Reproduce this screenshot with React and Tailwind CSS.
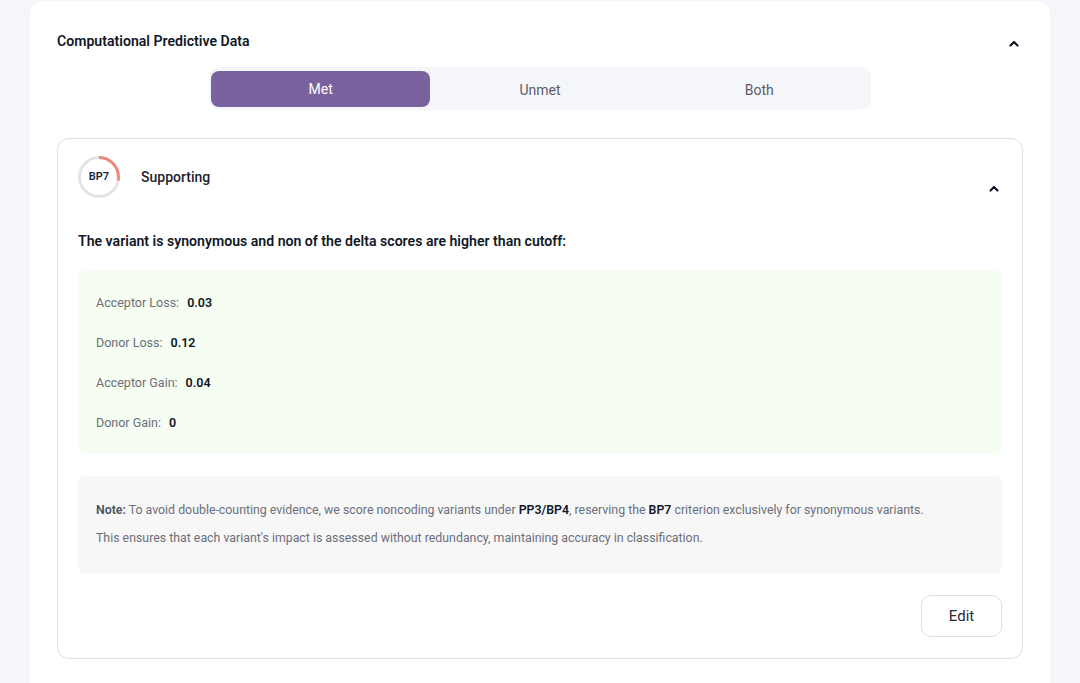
import React, { useState } from 'react';

const Chevron = () => (
  <svg className="w-3 h-3 text-gray-900" fill="none" stroke="currentColor" strokeWidth="2.2" viewBox="0 0 12 12">
    <path strokeLinecap="round" strokeLinejoin="round" d="M2.5 7.5L6 4l3.5 3.5" />
  </svg>
);

const Ring = ({ label }) => (
  <div className="relative w-[42px] h-[42px] shrink-0">
    <svg className="w-[42px] h-[42px]" viewBox="0 0 42 42">
      <circle cx="21" cy="21" r="19.5" fill="none" stroke="#e4e4e7" strokeWidth="3" />
      <circle
        cx="21"
        cy="21"
        r="19.5"
        fill="none"
        stroke="#f0877d"
        strokeWidth="3"
        strokeDasharray="34 200"
        transform="rotate(-90 21 21)"
      />
    </svg>
    <span className="absolute inset-0 flex items-center justify-center text-[11px] font-semibold text-gray-800">{label}</span>
  </div>
);

const scores = [
  ['Acceptor Loss:', '0.03'],
  ['Donor Loss:', '0.12'],
  ['Acceptor Gain:', '0.04'],
  ['Donor Gain:', '0'],
];

export default function App() {
  const [tab, setTab] = useState('Met');
  return (
    <div className="min-h-screen bg-[#f5f6fa] px-[30px] pt-[1px]" style={{ fontFamily: 'Roboto, "Liberation Sans", sans-serif' }}>
      <div className="bg-white rounded-t-xl px-[27px] pt-[31px] pb-6">
        <div className="flex items-center justify-between h-5">
          <h2 className="text-[14.1px] font-semibold text-[#111827]">Computational Predictive Data</h2>
          <div className="mr-[3px] mt-1"><Chevron /></div>
        </div>

        <div className="mx-auto mt-[15px] w-[662px] bg-[#f5f6fa] rounded-[10px] py-[3px] px-[2px] grid grid-cols-3">
          {['Met', 'Unmet', 'Both'].map((t) => (
            <button
              key={t}
              onClick={() => setTab(t)}
              className={
                tab === t
                  ? 'h-[36px] mt-[1px] rounded-[8px] bg-[#7a629e] text-white text-[14px]'
                  : 'h-[36px] mt-[1px] pt-[3px] text-[14px] text-[#5b5b66]'
              }
            >
              {t}
            </button>
          ))}
        </div>

        <div className="mt-[28px] border border-[#dedee3] rounded-xl px-5 pt-[17px] pb-[21px]">
          <div className="flex items-start justify-between">
            <div className="flex items-center gap-[21px]">
              <Ring label="BP7" />
              <span className="text-[14px] font-medium text-[#1f2230]">Supporting</span>
            </div>
            <div className="mt-[27px] mr-[2px]"><Chevron /></div>
          </div>

          <p className="mt-[33px] text-[14.1px] font-semibold text-[#111827] leading-5">
            The variant is synonymous and non of the delta scores are higher than cutoff:
          </p>

          <div className="mt-[19px] bg-[#f6fdf2] rounded-lg px-[18px] pt-[23px] pb-[21px] flex flex-col gap-5">
            {scores.map(([k, v]) => (
              <div key={k} className="h-5 flex items-center text-[12.5px]">
                <span className="text-[#6b6f7b]">{k}</span>
                <span className="ml-2 font-semibold text-[#111827]">{v}</span>
              </div>
            ))}
          </div>

          <div className="mt-[22px] bg-[#f7f7f8] rounded-lg px-[18px] pt-[24px] pb-[26px] text-[12.35px] text-[#6b6f7b] leading-5">
            <p>
              <span className="font-semibold text-[#4b4f5c]">Note:</span> To avoid double-counting evidence, we score noncoding variants under{' '}
              <span className="font-semibold text-[#111827]">PP3/BP4</span>, reserving the{' '}
              <span className="font-semibold text-[#111827]">BP7</span> criterion exclusively for synonymous variants.
            </p>
            <p className="mt-2">This ensures that each variant's impact is assessed without redundancy, maintaining accuracy in classification.</p>
          </div>

          <div className="mt-[21px] flex justify-end">
            <button className="w-[81px] h-[42px] border border-[#dedee3] rounded-[10px] text-[15px] text-[#2a2a3a]">Edit</button>
          </div>
        </div>
      </div>
    </div>
  );
}
